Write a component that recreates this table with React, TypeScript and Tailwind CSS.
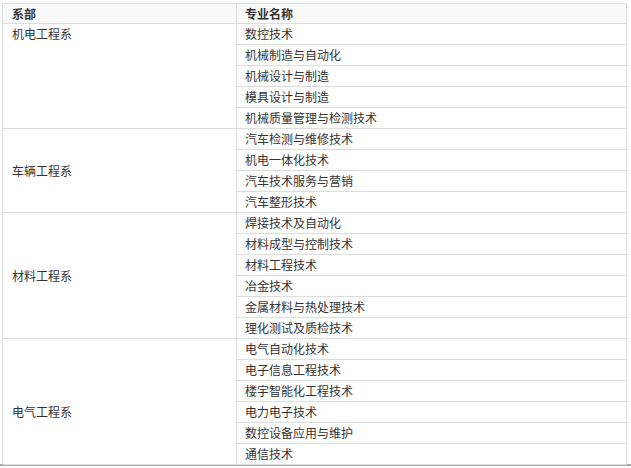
import React from "react";

const groups: { name: string; items: string[]; pad: string }[] = [
  {
    name: "机电工程系",
    items: ["数控技术", "机械制造与自动化", "机械设计与制造", "模具设计与制造", "机械质量管理与检测技术"],
    pad: "items-start",
  },
  {
    name: "车辆工程系",
    items: ["汽车检测与维修技术", "机电一体化技术", "汽车技术服务与营销", "汽车整形技术"],
    pad: "items-center",
  },
  {
    name: "材料工程系",
    items: ["焊接技术及自动化", "材料成型与控制技术", "材料工程技术", "冶金技术", "金属材料与热处理技术", "理化测试及质检技术"],
    pad: "items-center",
  },
  {
    name: "电气工程系",
    items: ["电气自动化技术", "电子信息工程技术", "楼宇智能化工程技术", "电力电子技术", "数控设备应用与维护", "通信技术"],
    pad: "items-center pt-[20px]",
  },
];

export default function App() {
  return (
    <div
      className="w-[631px] h-[468px] bg-white text-[12px] text-[#333] overflow-hidden"
      style={{ fontFamily: '"Noto Sans CJK SC", "Noto Sans", sans-serif' }}
    >
      <div className="pt-[3px] pl-[2px]">
        <div className="w-[625px] border-t border-l border-[#dddddd]">
          <div className="flex h-[20px] bg-[#f9f9f9] font-bold">
            <div className="w-[234px] shrink-0 border-r border-b border-[#dddddd] pl-[9px] flex items-center leading-none">
              系部
            </div>
            <div className="flex-1 border-r border-b border-[#dddddd] pl-[8px] flex items-center leading-none">
              专业名称
            </div>
          </div>
          {groups.map((g) => (
            <div key={g.name} className="flex">
              <div
                className={`w-[234px] shrink-0 border-r border-b border-[#dddddd] pl-[9px] flex ${g.pad}`}
              >
                <div className="h-[20px] flex items-center leading-none">{g.name}</div>
              </div>
              <div className="flex-1 flex flex-col">
                {g.items.map((it) => (
                  <div
                    key={it}
                    className="h-[21px] border-r border-b border-[#dddddd] pl-[8px] flex items-center leading-none"
                  >
                    {it}
                  </div>
                ))}
              </div>
            </div>
          ))}
        </div>
      </div>
      <div className="w-[631px] h-[2px] bg-[#aaaaaa] -mt-[1px]" />
    </div>
  );
}
